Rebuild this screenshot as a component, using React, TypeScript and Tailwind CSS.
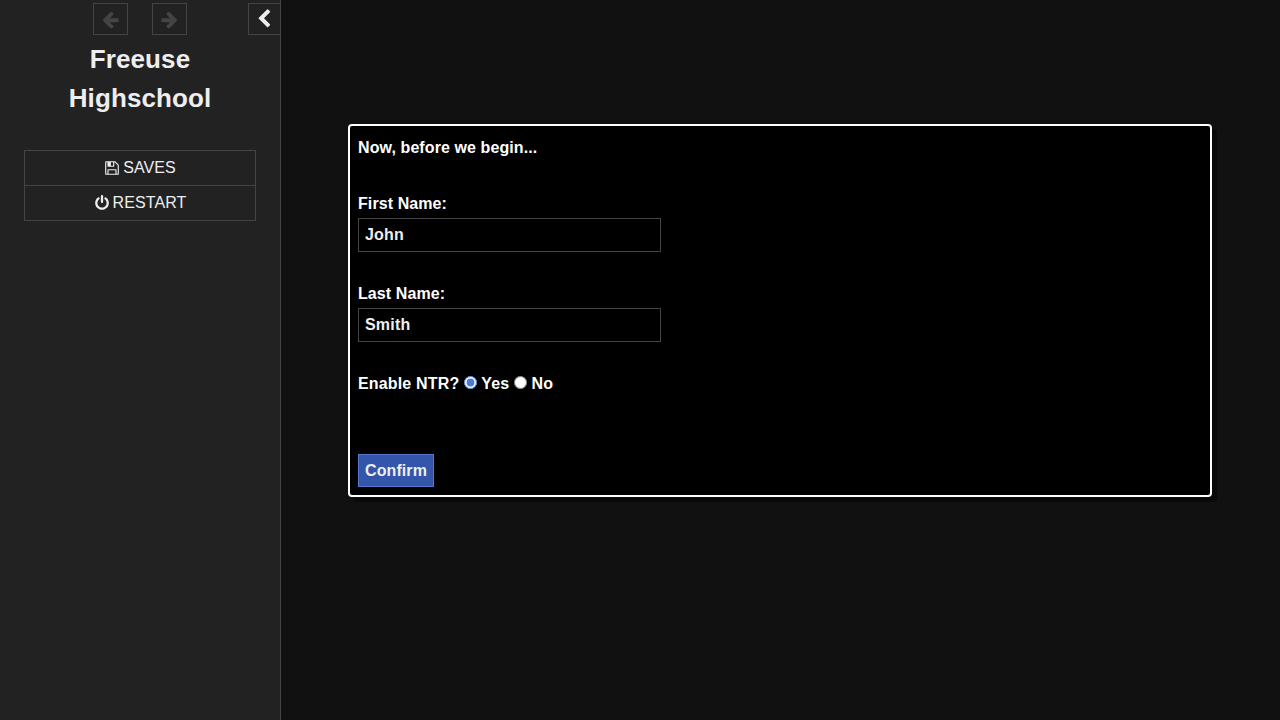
const font = { fontFamily: '"Liberation Sans", Arial, sans-serif' };

// Font Awesome 4 outlines, the package icons are too thin here
function ArrowLeftIcon() {
  return (
    <svg viewBox="0 0 1792 1792" fill="currentColor" className="size-[19px]">
      <path d="M1664 896v128q0 53-32.500 90.500t-84.500 37.500h-704l293 294q38 36 38 90t-38 90l-75 76q-37 37-90 37-52 0-91-37l-651-652q-37-37-37-90 0-52 37-91l651-650q38-38 91-38 52 0 90 38l75 74q38 38 38 91t-38 91l-293 293h704q52 0 84.500 37.500t32.500 90.500z" />
    </svg>
  );
}

function ArrowRightIcon() {
  return (
    <svg viewBox="0 0 1792 1792" fill="currentColor" className="size-[19px]">
      <path d="M1600 960q0 54-37 91l-651 651q-39 37-91 37-51 0-90-37l-75-75q-38-38-38-91t38-91l293-293h-704q-52 0-84.500-37.500t-32.500-90.500v-128q0-53 32.500-90.500t84.500-37.500h704l-293-294q-38-36-38-90t38-90l75-75q38-38 90-38 53 0 91 38l651 651q37 35 37 90z" />
    </svg>
  );
}

function ChevronLeftIcon() {
  return (
    <svg viewBox="0 0 1792 1792" fill="currentColor" className="size-[20px]">
      <path d="M1427 301l-531 531 531 531q19 19 19 45t-19 45l-166 166q-19 19-45 19t-45-19l-742-742q-19-19-19-45t19-45l742-742q19-19 45-19t45 19l166 166q19 19 19 45t-19 45z" />
    </svg>
  );
}

function SaveIcon() {
  return (
    <svg viewBox="0 0 1792 1792" fill="currentColor" className="size-4">
      <path d="M512 1536h768v-384h-768v384zm896 0h128v-896q0-14-10-38.500t-20-34.500l-281-281q-10-10-34-20t-39-10v416q0 40-28 68t-68 28h-576q-40 0-68-28t-28-68v-416h-128v1280h128v-416q0-40 28-68t68-28h832q40 0 68 28t28 68v416zm-384-928v-320q0-13-9.500-22.500t-22.500-9.500h-192q-13 0-22.500 9.500t-9.500 22.500v320q0 13 9.500 22.500t22.500 9.500h192q13 0 22.500-9.500t9.500-22.500zm640 32v928q0 40-28 68t-68 28h-1344q-40 0-68-28t-28-68v-1344q0-40 28-68t68-28h928q40 0 88 20t76 48l280 280q28 28 48 76t20 88z" />
    </svg>
  );
}

function PowerIcon() {
  return (
    <svg viewBox="0 0 1792 1792" fill="currentColor" className="size-4">
      <path d="M1664 896q0 156-61 298t-164 245-245 164-298 61-298-61-245-164-164-245-61-298q0-182 80.500-343t226.500-270q43-32 95.500-25t83.500 50q32 42 24.500 94.500t-49.500 84.500q-98 74-151.500 181t-53.500 228q0 104 40.500 198.500t109.500 163.500 163.500 109.500 198.500 40.500 198.500-40.500 163.500-109.500 109.500-163.500 40.500-198.500q0-121-53.500-228t-151.500-181q-42-32-49.500-84.500t24.500-94.500q31-43 84-50t95 25q146 109 226.500 270t80.500 343zm-640-768v640q0 52-38 90t-90 38-90-38-38-90v-640q0-52 38-90t90-38 90 38 38 90z" />
    </svg>
  );
}

function HistoryButton({ children }: { children: React.ReactNode }) {
  return (
    <button type="button" disabled className="grid h-8 w-[35px] place-items-center border border-[#444] text-[#444]">
      {children}
    </button>
  );
}

function MenuItem({ icon, label }: { icon: React.ReactNode; label: string }) {
  return (
    <li className="flex h-[35px] items-center justify-center gap-[3px] border-b border-[#444] tracking-[0.1px] text-[#eee] last:h-[34px] last:border-b-0">
      {icon}
      {label}
    </li>
  );
}

function NameField({ label, value }: { label: string; value: string }) {
  return (
    <div>
      <div className="h-7 leading-7">{label}</div>
      <input
        type="text"
        defaultValue={value}
        className="block h-[34px] w-[303px] border border-[#444] bg-black px-1.5 font-bold tracking-[0.2px] text-[#eee] outline-none"
      />
    </div>
  );
}

export default function App() {
  return (
    <div className="flex h-[720px] w-[1280px] overflow-hidden bg-[#111] text-base" style={font}>
      <aside className="relative h-full w-[281px] shrink-0 border-r border-[#444] bg-[#222] px-6 pt-[3px]">
        <button type="button" className="absolute top-[3px] right-[-1px] grid h-8 w-[33px] place-items-center border border-[#444] pr-[2px] text-[#eee]">
          <ChevronLeftIcon />
        </button>
        <div className="flex justify-center gap-6">
          <HistoryButton>
            <ArrowLeftIcon />
          </HistoryButton>
          <HistoryButton>
            <ArrowRightIcon />
          </HistoryButton>
        </div>
        <h1 className="mt-[5px] text-center text-[26px] leading-[39px] font-bold tracking-[0.1px] text-[#eee]">
          Freeuse
          <br />
          Highschool
        </h1>
        <ul className="mt-[32px] border border-[#444]">
          <MenuItem icon={<SaveIcon />} label="SAVES" />
          <MenuItem icon={<PowerIcon />} label="RESTART" />
        </ul>
      </aside>

      <main className="flex-1 pt-[124px] pr-[68px] pl-[67px]">
        <section className="rounded border-2 border-white bg-black p-2 font-bold tracking-[0.09px] text-white shadow-[5px_5px_1px_#0a0a0a]">
          <div className="h-7 leading-7">Now, before we begin...</div>
          <div className="h-7" />
          <NameField label="First Name:" value="John" />
          <div className="h-7" />
          <NameField label="Last Name:" value="Smith" />
          <div className="h-7" />
          <div className="h-7 leading-7 tracking-[0.16px]">
            Enable NTR? <input type="radio" name="ntr" defaultChecked className="accent-[#4a7bd8]" /> Yes{' '}
            <input type="radio" name="ntr" /> No
          </div>
          <div className="h-14" />
          <button type="button" className="block h-[33px] w-[76px] border border-[#57c] bg-[#35a] font-bold text-[#eee]">
            Confirm
          </button>
        </section>
      </main>
    </div>
  );
}
